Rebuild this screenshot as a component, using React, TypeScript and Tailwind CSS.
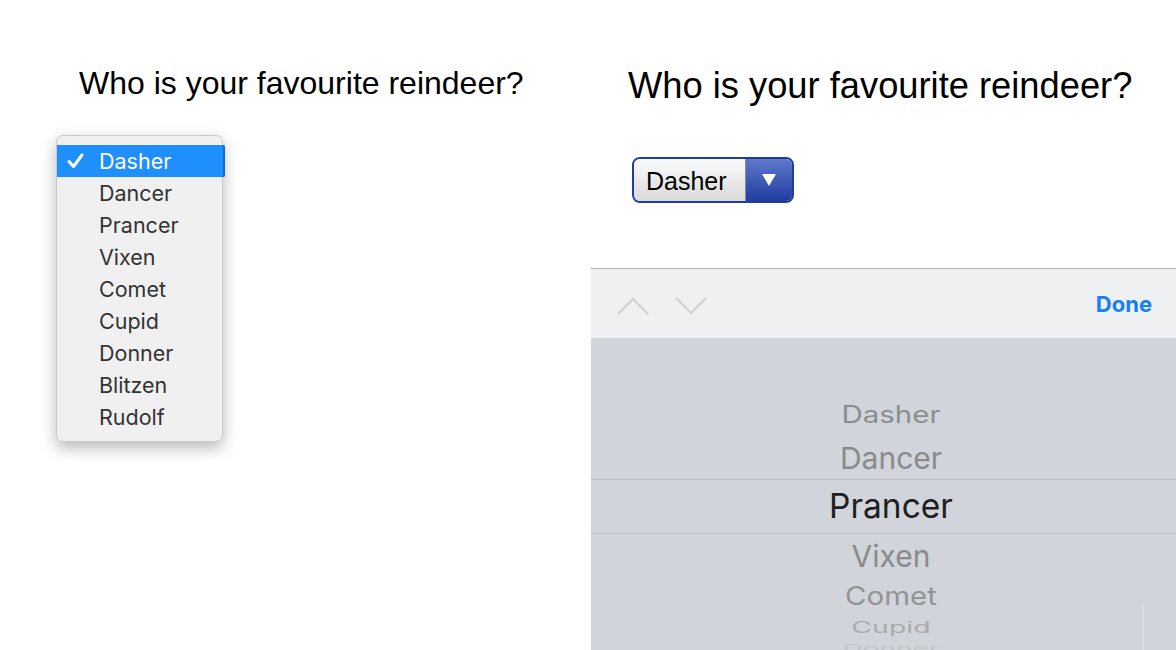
import React from "react"

const names = ["Dasher", "Dancer", "Prancer", "Vixen", "Comet", "Cupid", "Donner", "Blitzen", "Rudolf"]

function MacMenu() {
  return (
    <div className="w-[167px] rounded-[7px] border border-[#c9c9c9] bg-[#f0f0f0] pt-[9px] pb-[8px] shadow-[0_6px_16px_rgba(0,0,0,0.28)]">
      {names.map((n, i) =>
        i === 0 ? (
          <div
            key={n}
            className="relative -mr-[3px] flex h-[32px] items-center rounded-r-[2px] bg-[#1f8ffd] text-white shadow-[inset_-2px_0_0_#1565d8]"
          >
            <span className="flex w-[42px] justify-start pl-[10px]">
              <svg width="17" height="16" viewBox="0 0 17 16">
                <path d="M2 8.5 L6.5 13.5 L15 2" fill="none" stroke="white" strokeWidth="3" strokeLinecap="round" strokeLinejoin="round" />
              </svg>
            </span>
            <span className="text-[21.5px]">{n}</span>
          </div>
        ) : (
          <div key={n} className="flex h-[32px] items-center pl-[42px] text-[21.5px] text-[#333333]">
            {n}
          </div>
        )
      )}
    </div>
  )
}

function OldSelect() {
  return (
    <div className="flex h-[46px] w-[162px] overflow-hidden rounded-[8px] border-2 border-[#1f3c9e]">
      <div className="flex flex-1 items-center bg-gradient-to-b from-[#fbfbfb] to-[#d9d9d9] pl-[12px] pt-[3px] text-[25px] text-black [font-family:'Liberation_Sans',Arial,sans-serif]">
        Dasher
      </div>
      <div className="flex w-[47px] items-center justify-center border-l border-[#8b8b8b] bg-gradient-to-b from-[#6079ca] to-[#213c9f]">
        <svg width="16" height="14" viewBox="0 0 16 14">
          <path d="M1 1 L15 1 L8 13 Z" fill="white" />
        </svg>
      </div>
    </div>
  )
}

type Row = { name: string; h: number; size: number; sy: number; color: string; selected?: boolean }

const rows: Row[] = [
  { name: "Dasher", h: 42, size: 29.5, sy: 0.8, color: "#8d8d8f" },
  { name: "Dancer", h: 43, size: 30, sy: 1, color: "#8a8a8c" },
  { name: "Prancer", h: 55, size: 33.5, sy: 1, color: "#1f1f1f", selected: true },
  { name: "Vixen", h: 43, size: 30, sy: 1, color: "#8a8a8c" },
  { name: "Comet", h: 40, size: 29.5, sy: 0.85, color: "#939395" },
  { name: "Cupid", h: 21, size: 28.5, sy: 0.55, color: "#a9aaac" },
  { name: "Donner", h: 22, size: 28, sy: 0.35, color: "#c2c3c6" },
]

function IosPicker() {
  return (
    <div className="flex min-h-0 flex-1 flex-col border-t border-[#b4b4b6]">
      <div className="flex h-[69px] shrink-0 items-center bg-[#eff0f2] pl-[26px] pr-[24px]">
        <svg width="32" height="18" viewBox="0 0 32 18" className="mt-[4px]">
          <path d="M1 17 L16 2 L31 17" fill="none" stroke="#cfd0d2" strokeWidth="2" />
        </svg>
        <svg width="32" height="18" viewBox="0 0 32 18" className="mt-[4px] ml-[26px]">
          <path d="M1 1 L16 16 L31 1" fill="none" stroke="#cfd0d2" strokeWidth="2" />
        </svg>
        <span className="ml-auto pt-[2px] text-[22px] font-bold text-[#147efb]">Done</span>
      </div>
      <div className="relative flex flex-1 flex-col overflow-hidden bg-[#d1d5db] pt-[56px]">
        {rows.map((r) => (
          <div
            key={r.name}
            className={
              "flex shrink-0 items-center justify-center pl-[15px] " +
              (r.selected ? "border-y border-[#bcc0c6]" : "")
            }
            style={{ height: r.h }}
          >
            <span
              className="leading-none"
              style={{ fontSize: r.size, color: r.color, transform: `scaleY(${r.sy})` }}
            >
              {r.name}
            </span>
          </div>
        ))}
        <div className="absolute right-[32px] bottom-0 h-[55px] w-px bg-[#e3e6ea]" />
      </div>
    </div>
  )
}

export default function App() {
  return (
    <div className="flex h-[650px] w-[1176px] bg-white [font-family:Inter,'Noto_Sans',sans-serif]">
      <div className="w-[591px] shrink-0 pl-[56px] pt-[63px]">
        <h1 className="ml-[23px] text-[32px] leading-[40px] text-black [font-family:'Liberation_Sans',Arial,sans-serif]">
          Who is your favourite reindeer?
        </h1>
        <div className="mt-[32px]">
          <MacMenu />
        </div>
      </div>
      <div className="flex flex-1 flex-col">
        <div className="pl-[37px] pt-[64px]">
          <h1 className="text-[36.3px] leading-[44px] text-black [font-family:'Liberation_Sans',Arial,sans-serif]">
            Who is your favourite reindeer?
          </h1>
          <div className="mt-[49px] ml-[4px]">
            <OldSelect />
          </div>
        </div>
        <div className="mt-[65px] flex flex-1 flex-col">
          <IosPicker />
        </div>
      </div>
    </div>
  )
}
